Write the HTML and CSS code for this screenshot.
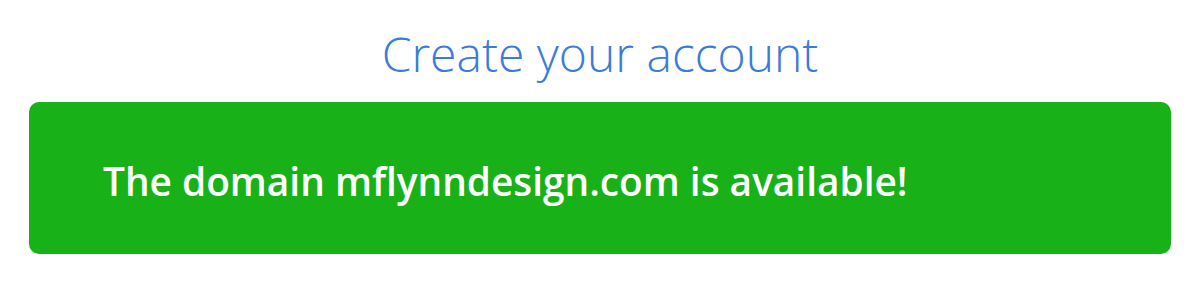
FILE: index.html
```html
<!DOCTYPE html>
<html lang="en">
<head>
    <meta charset="UTF-8">
    <meta name="viewport" content="width=device-width, initial-scale=1.0">
    <title>Create your account</title>
    <link rel="stylesheet" href="styles.css">
</head>
<body>

<div class="signup">
    <h1 class="signup-title">Create your account</h1>

    <!-- Domain check result -->
    <div class="domain-status">
        <p>The domain mflynndesign.com is available!</p>
    </div>
</div>

</body>
</html>
```

FILE: styles.css
```css
body {
    font-family: "Open Sans", "Noto Sans", sans-serif;
    background-color: #fff;
    margin: 0;
    padding: 0;
}

.signup {
    padding: 22px 29px 0 29px;
}

.signup-title {
    margin: 0;
    font-size: 48px;
    font-weight: 300;
    line-height: 64px;
    color: #3c7bd9;
    text-align: center;
}

.domain-status {
    margin-top: 16px;
    height: 152px;
    display: flex;
    align-items: center;
    padding: 6px 74px 0 74px;
    box-sizing: border-box;
    background-color: #18b218;
    border-radius: 10px;
}

.domain-status p {
    margin: 0;
    font-size: 38.8px;
    font-weight: 600;
    color: #fff;
}
```
